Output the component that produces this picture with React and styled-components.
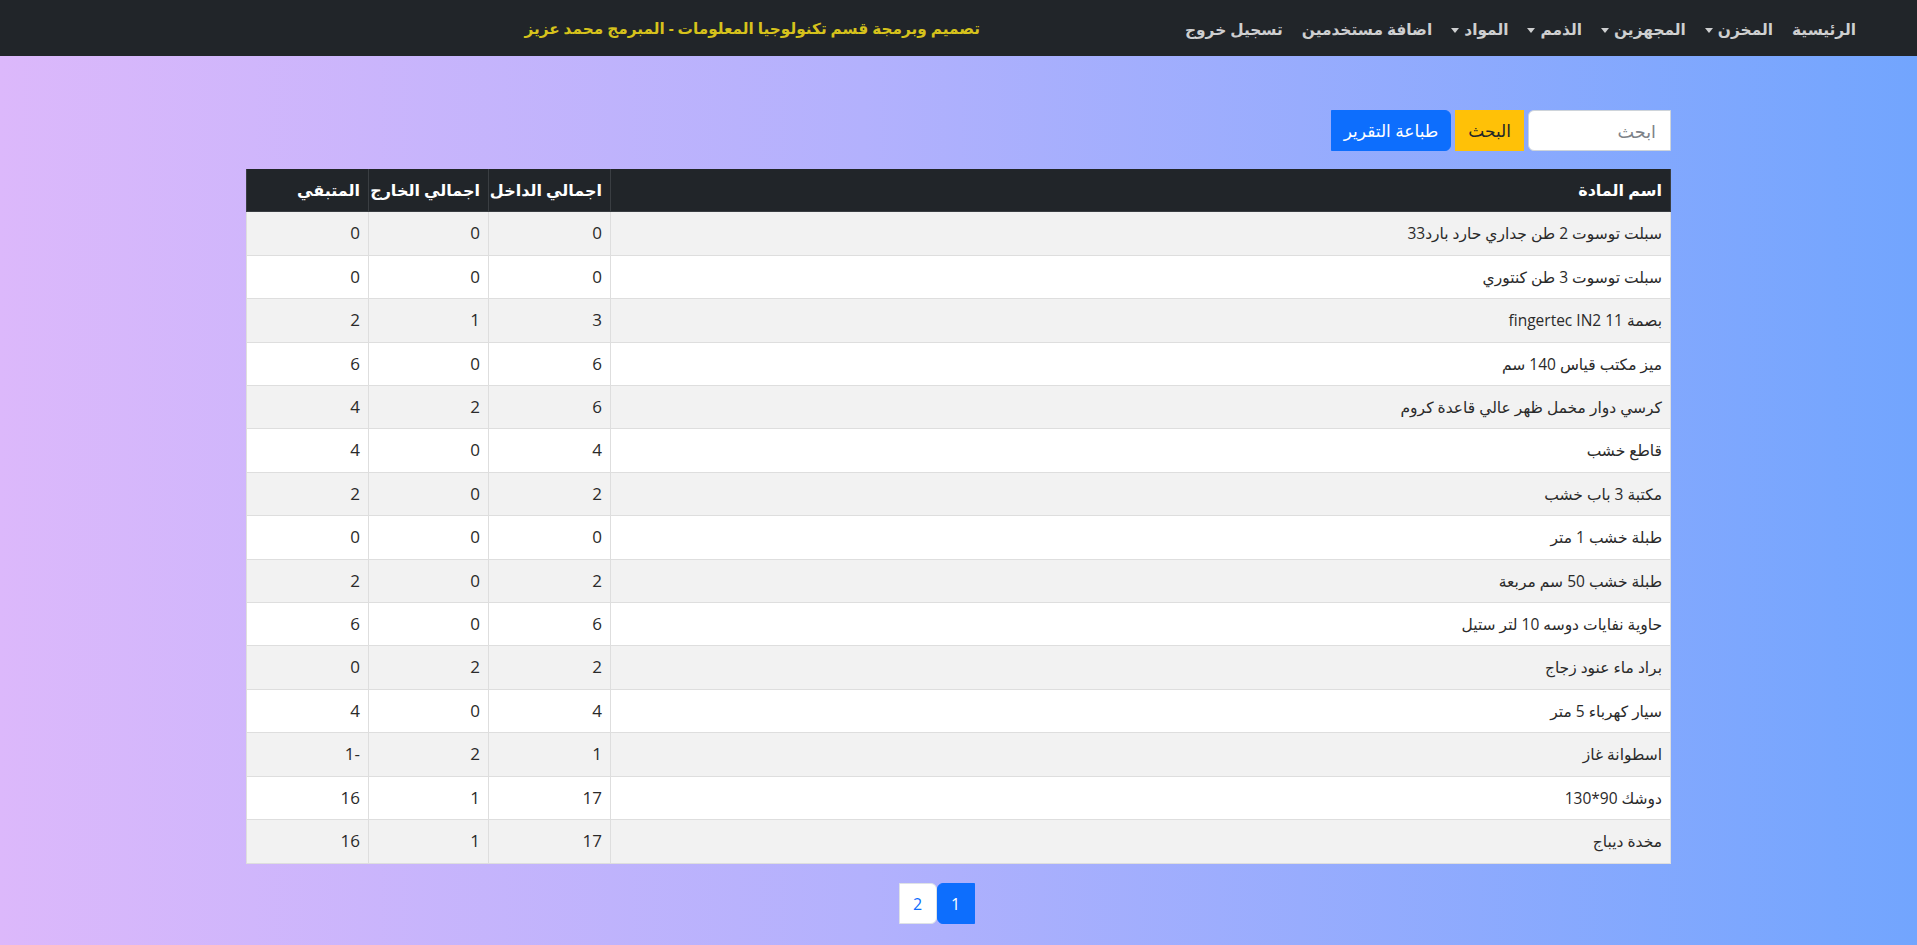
import React from "react";
import styled, { createGlobalStyle } from "styled-components";

const Global = createGlobalStyle`
  html, body { margin: 0; padding: 0; }
  body {
    min-height: 100vh;
    direction: rtl;
    font-family: "Open Sans", "DejaVu Sans", sans-serif;
    font-size: 17.6px;
    line-height: 1.5;
    color: #212529;
    background: linear-gradient(90deg, #dcb8fb 0%, #b3b1fd 45%, #72a5fe 100%);
    background-attachment: fixed;
  }
  * { box-sizing: border-box; }
`;

const Navbar = styled.nav`
  height: 56px;
  background: #212529;
  display: flex;
  align-items: center;
  padding-right: 53px;
`;

const NavList = styled.ul`
  list-style: none;
  margin: 0;
  padding: 0;
  width: 884px;
  display: flex;
  align-items: center;
  gap: 3px;
`;

const NavLink = styled.a`
  display: inline-flex;
  align-items: center;
  padding: 0 8px;
  color: rgba(255, 255, 255, 0.78);
  font-weight: 700;
  font-size: 15.4px;
  text-decoration: none;
  white-space: nowrap;
  &::after {
    content: ${(p) => (p.$dropdown ? '""' : "none")};
    display: inline-block;
    margin-right: 5px;
    margin-top: 2px;
    border-top: 5px solid currentColor;
    border-left: 4px solid transparent;
    border-right: 4px solid transparent;
  }
`;

const Title = styled.div`
  color: #d6c21c;
  font-weight: 700;
  font-size: 15.3px;
  white-space: nowrap;
`;

const Main = styled.main`
  width: 1425px;
  margin: 0 auto;
  padding-top: 54px;
  padding-bottom: 23px;
`;

const SearchRow = styled.form`
  display: flex;
  align-items: stretch;
  gap: 4px;
  height: 41px;
  margin-bottom: 18px;
`;

const SearchInput = styled.input`
  width: 143px;
  height: 41px;
  border: 1px solid #ced4da;
  border-top-left-radius: 6px;
  border-bottom-left-radius: 6px;
  border-top-right-radius: 0;
  border-bottom-right-radius: 0;
  padding: 6px 14px;
  font-family: inherit;
  font-size: 17.6px;
  direction: rtl;
  background: #fff;
  outline: none;
  &::placeholder { color: #7d8288; }
`;

const Button = styled.button`
  height: 41px;
  padding: 0 12px;
  border: 1px solid ${(p) => p.$bg};
  background: ${(p) => p.$bg};
  color: ${(p) => p.$fg};
  font-family: inherit;
  font-size: 17px;
  border-radius: ${(p) => (p.$rounded ? "0 6px 6px 0" : "0")};
  cursor: pointer;
  white-space: nowrap;
`;

const Table = styled.table`
  width: 100%;
  border-collapse: collapse;
  table-layout: fixed;
  background: #fff;
`;

const Th = styled.th`
  background: #212529;
  color: #fff;
  font-weight: 700;
  font-size: 16px;
  text-align: right;
  padding: 8px;
  line-height: 26.4px;
  border: 1px solid #3a3e42;
  border-top: 0;
  white-space: nowrap;
`;

const Tr = styled.tr`
  background: ${(p) => (p.$striped ? "#f2f2f2" : "#fff")};
`;

const Td = styled.td`
  text-align: right;
  padding: 8px;
  line-height: 26.4px;
  height: 43.33px;
  border: 1px solid #dedede;
  font-size: ${(p) => (p.$num ? "17px" : "15.5px")};
  color: #2a2a2a;
  white-space: nowrap;
`;

const Pager = styled.ul`
  list-style: none;
  display: flex;
  justify-content: center;
  margin: 19px 0 0;
  padding: 0 44px 0 0;
`;

const PageLink = styled.a`
  display: block;
  width: 38px;
  height: 41px;
  line-height: 41px;
  text-align: center;
  font-size: 16px;
  text-decoration: none;
  background: ${(p) => (p.$active ? "#0d6efd" : "#fff")};
  color: ${(p) => (p.$active ? "#fff" : "#0d6efd")};
  border-radius: ${(p) => (p.$active ? "6px 0 0 6px" : "0 6px 6px 0")};
  border: 1px solid ${(p) => (p.$active ? "#0d6efd" : "#dee2e6")};
`;

const navItems = [
  { t: "الرئيسية" },
  { t: "المخزن", d: true },
  { t: "المجهزين", d: true },
  { t: "الذمم", d: true },
  { t: "المواد", d: true },
  { t: "اضافة مستخدمين" },
  { t: "تسجيل خروج" },
];

const rows = [
  ["سبلت توسوت 2 طن جداري حارد بارد33", 0, 0, 0],
  ["سبلت توسوت 3 طن كنتوري", 0, 0, 0],
  ["بصمة fingertec IN2 11", 3, 1, 2],
  ["ميز مكتب قياس 140 سم", 6, 0, 6],
  ["كرسي دوار مخمل ظهر عالي قاعدة كروم", 6, 2, 4],
  ["قاطع خشب", 4, 0, 4],
  ["مكتبة 3 باب خشب", 2, 0, 2],
  ["طبلة خشب 1 متر", 0, 0, 0],
  ["طبلة خشب 50 سم مربعة", 2, 0, 2],
  ["حاوية نفايات دوسه 10 لتر ستيل", 6, 0, 6],
  ["براد ماء عنود زجاج", 2, 2, 0],
  ["سيار كهرباء 5 متر", 4, 0, 4],
  ["اسطوانة غاز", 1, 2, -1],
  ["دوشك 90*130", 17, 1, 16],
  ["مخدة ديباج", 17, 1, 16],
];

export default function App() {
  return (
    <>
      <Global />
      <Navbar>
        <NavList>
          {navItems.map((n) => (
            <li key={n.t}>
              <NavLink href="#" $dropdown={n.d}>
                {n.t}
              </NavLink>
            </li>
          ))}
        </NavList>
        <Title>تصميم وبرمجة قسم تكنولوجيا المعلومات - المبرمج محمد عزيز</Title>
      </Navbar>
      <Main>
        <SearchRow onSubmit={(e) => e.preventDefault()}>
          <SearchInput placeholder="ابحث" />
          <Button $bg="#ffc107" $fg="#212529">البحث</Button>
          <Button $bg="#0d6efd" $fg="#fff" $rounded>طباعة التقرير</Button>
        </SearchRow>
        <Table>
          <colgroup>
            <col />
            <col style={{ width: 122 }} />
            <col style={{ width: 120 }} />
            <col style={{ width: 122 }} />
          </colgroup>
          <thead>
            <tr>
              <Th>اسم المادة</Th>
              <Th>اجمالي الداخل</Th>
              <Th>اجمالي الخارج</Th>
              <Th>المتبقي</Th>
            </tr>
          </thead>
          <tbody>
            {rows.map((r, i) => (
              <Tr key={i} $striped={i % 2 === 0}>
                <Td>{r[0]}</Td>
                <Td $num>{r[1]}</Td>
                <Td $num>{r[2]}</Td>
                <Td $num>{r[3]}</Td>
              </Tr>
            ))}
          </tbody>
        </Table>
        <Pager>
          <li><PageLink href="#" $active>1</PageLink></li>
          <li><PageLink href="#">2</PageLink></li>
        </Pager>
      </Main>
    </>
  );
}
